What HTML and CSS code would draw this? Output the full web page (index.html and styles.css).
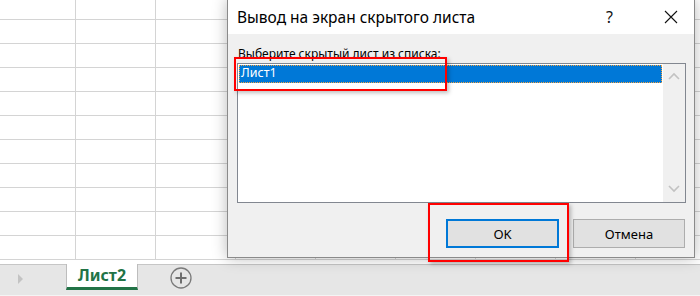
FILE: index.html
```html
<!DOCTYPE html>
<html lang="ru">
<head>
<meta charset="utf-8">
<title>Вывод на экран скрытого листа</title>
<link rel="stylesheet" href="styles.css">
</head>
<body>
<div class="app">
  <div class="sheet">
    <div class="grid">
      <div class="c"></div><div class="c"></div><div class="c"></div><div class="c"></div><div class="c"></div><div class="c"></div><div class="c"></div><div class="c"></div><div class="c"></div>
      <div class="c"></div><div class="c"></div><div class="c"></div><div class="c"></div><div class="c"></div><div class="c"></div><div class="c"></div><div class="c"></div><div class="c"></div>
      <div class="c"></div><div class="c"></div><div class="c"></div><div class="c"></div><div class="c"></div><div class="c"></div><div class="c"></div><div class="c"></div><div class="c"></div>
      <div class="c"></div><div class="c"></div><div class="c"></div><div class="c"></div><div class="c"></div><div class="c"></div><div class="c"></div><div class="c"></div><div class="c"></div>
      <div class="c"></div><div class="c"></div><div class="c"></div><div class="c"></div><div class="c"></div><div class="c"></div><div class="c"></div><div class="c"></div><div class="c"></div>
      <div class="c"></div><div class="c"></div><div class="c"></div><div class="c"></div><div class="c"></div><div class="c"></div><div class="c"></div><div class="c"></div><div class="c"></div>
      <div class="c"></div><div class="c"></div><div class="c"></div><div class="c"></div><div class="c"></div><div class="c"></div><div class="c"></div><div class="c"></div><div class="c"></div>
      <div class="c"></div><div class="c"></div><div class="c"></div><div class="c"></div><div class="c"></div><div class="c"></div><div class="c"></div><div class="c"></div><div class="c"></div>
      <div class="c"></div><div class="c"></div><div class="c"></div><div class="c"></div><div class="c"></div><div class="c"></div><div class="c"></div><div class="c"></div><div class="c"></div>
      <div class="c"></div><div class="c"></div><div class="c"></div><div class="c"></div><div class="c"></div><div class="c"></div><div class="c"></div><div class="c"></div><div class="c"></div>
      <div class="c"></div><div class="c"></div><div class="c"></div><div class="c"></div><div class="c"></div><div class="c"></div><div class="c"></div><div class="c"></div><div class="c"></div>
    </div>
  </div>
  <div class="tabbar">
    <span class="nav-arrow"></span>
    <div class="tab active">Лист2</div>
    <button class="add-sheet" aria-label="Новый лист">
      <svg width="22" height="22" viewBox="0 0 22 22"><circle cx="11" cy="11" r="10" fill="none" stroke="#7a7a7a" stroke-width="1.3"/><path d="M11 5.5v11M5.5 11h11" stroke="#6e6e6e" stroke-width="2"/></svg>
    </button>
  </div>

  <div class="dialog">
    <div class="titlebar">
      <span class="title">Вывод на экран скрытого листа</span>
      <span class="help">?</span>
      <span class="close">
        <svg width="14" height="14" viewBox="0 0 14 14"><path d="M1 1L13 13M13 1L1 13" stroke="#111" stroke-width="1.1"/></svg>
      </span>
    </div>
    <div class="body">
      <div class="label">Выберите скрытый лист из списка:</div>
      <div class="listbox">
        <div class="items">
          <div class="item selected">Лист1</div>
        </div>
        <div class="scrollbar">
          <svg width="12" height="8" viewBox="0 0 12 8"><path d="M1 7L6 2L11 7" fill="none" stroke="#c2c2c2" stroke-width="1.6"/></svg>
          <svg width="12" height="8" viewBox="0 0 12 8"><path d="M1 1L6 6L11 1" fill="none" stroke="#c2c2c2" stroke-width="1.6"/></svg>
        </div>
      </div>
      <div class="buttons">
        <button class="btn default">OK</button>
        <button class="btn">Отмена</button>
      </div>
    </div>
    <div class="mark mark-item"></div>
    <div class="mark mark-ok"></div>
  </div>
</div>
</body>
</html>
```

FILE: styles.css
```css
* { box-sizing: border-box; }
html, body { margin: 0; padding: 0; }
body {
  width: 700px;
  height: 296px;
  overflow: hidden;
  background: #ffffff;
  font-family: "Noto Sans", "Open Sans", sans-serif;
}
.app {
  position: relative;
  width: 700px;
  height: 296px;
  display: flex;
  flex-direction: column;
}
.sheet {
  height: 264px;
  overflow: hidden;
  background: #fff;
}
.grid {
  display: grid;
  grid-template-columns: 76px repeat(8, 80px);
  grid-template-rows: 20px repeat(10, 24px);
}
.c {
  border-right: 1px solid #d4d4d4;
  border-bottom: 1px solid #d4d4d4;
}
.tabbar {
  height: 32px;
  background: #e6e6e6;
  border-top: 1px solid #c6c6c6;
  border-bottom: 1px solid #f4f4f4;
  display: flex;
  align-items: flex-start;
  padding-left: 18px;
}
.nav-arrow {
  width: 0;
  height: 0;
  margin-top: 9px;
  border-left: 5px solid #c3c3c3;
  border-top: 5px solid transparent;
  border-bottom: 5px solid transparent;
}
.tab {
  margin-left: 43px;
  margin-top: -1px;
  width: 72px;
  height: 26px;
  background: #fff;
  border-left: 1px solid #bdbdbd;
  border-right: 1px solid #bdbdbd;
  border-bottom: 3px solid #217346;
  color: #217346;
  font-weight: 700;
  font-size: 16px;
  line-height: 22px;
  text-align: center;
}
.add-sheet {
  margin-left: 32px;
  margin-top: 2px;
  padding: 0;
  border: 0;
  background: transparent;
  width: 22px;
  height: 22px;
  display: flex;
}
.dialog {
  position: absolute;
  left: 227px;
  top: -1px;
  width: 468px;
  height: 259px;
  background: #f0f0f0;
  border: 1px solid #8a8a8a;
  box-shadow: 0 0 14px rgba(0, 0, 0, 0.28);
  display: flex;
  flex-direction: column;
}
.titlebar {
  height: 34px;
  background: #fff;
  display: flex;
  align-items: center;
  padding-left: 9px;
}
.title {
  font-size: 15.5px;
  color: #000;
  flex: 1;
  white-space: nowrap;
}
.help {
  font-size: 16px;
  color: #111;
  width: 58px;
  text-align: left;
}
.close {
  width: 30px;
  display: flex;
}
.body {
  flex: 1;
  padding: 11px 8px 9px 9px;
  display: flex;
  flex-direction: column;
}
.label {
  font-size: 12px;
  color: #000;
  line-height: 17px;
  height: 18px;
  padding-left: 1px;
}
.listbox {
  height: 140px;
  background: #fff;
  border: 1px solid #828790;
  display: flex;
}
.items {
  flex: 1;
  padding: 1px;
}
.item {
  height: 18px;
  font-size: 12.5px;
  line-height: 16px;
  padding-left: 2px;
}
.item.selected {
  background: #0078d7;
  color: #fff;
  outline: 1px dotted #f5a340;
  outline-offset: -1px;
}
.scrollbar {
  width: 22px;
  background: #f0f0f0;
  display: flex;
  flex-direction: column;
  justify-content: space-between;
  align-items: center;
  padding: 8px 0 9px;
}
.buttons {
  display: flex;
  justify-content: flex-end;
  gap: 14px;
  margin-top: 16px;
  padding-right: 1px;
}
.btn {
  width: 112px;
  height: 29px;
  background: #e1e1e1;
  border: 1px solid #adadad;
  font-family: inherit;
  font-size: 13px;
  color: #000;
  padding: 0;
}
.btn.default {
  width: 113px;
  border: 2px solid #0078d7;
}
.mark {
  position: absolute;
  border: 2.5px solid #ff0000;
  box-shadow: 2px 2px 4px rgba(0, 0, 0, 0.25);
}
.mark-item {
  left: 6px;
  top: 57px;
  width: 213px;
  height: 34px;
}
.mark-ok {
  left: 200px;
  top: 203px;
  width: 141px;
  height: 59px;
}
```
